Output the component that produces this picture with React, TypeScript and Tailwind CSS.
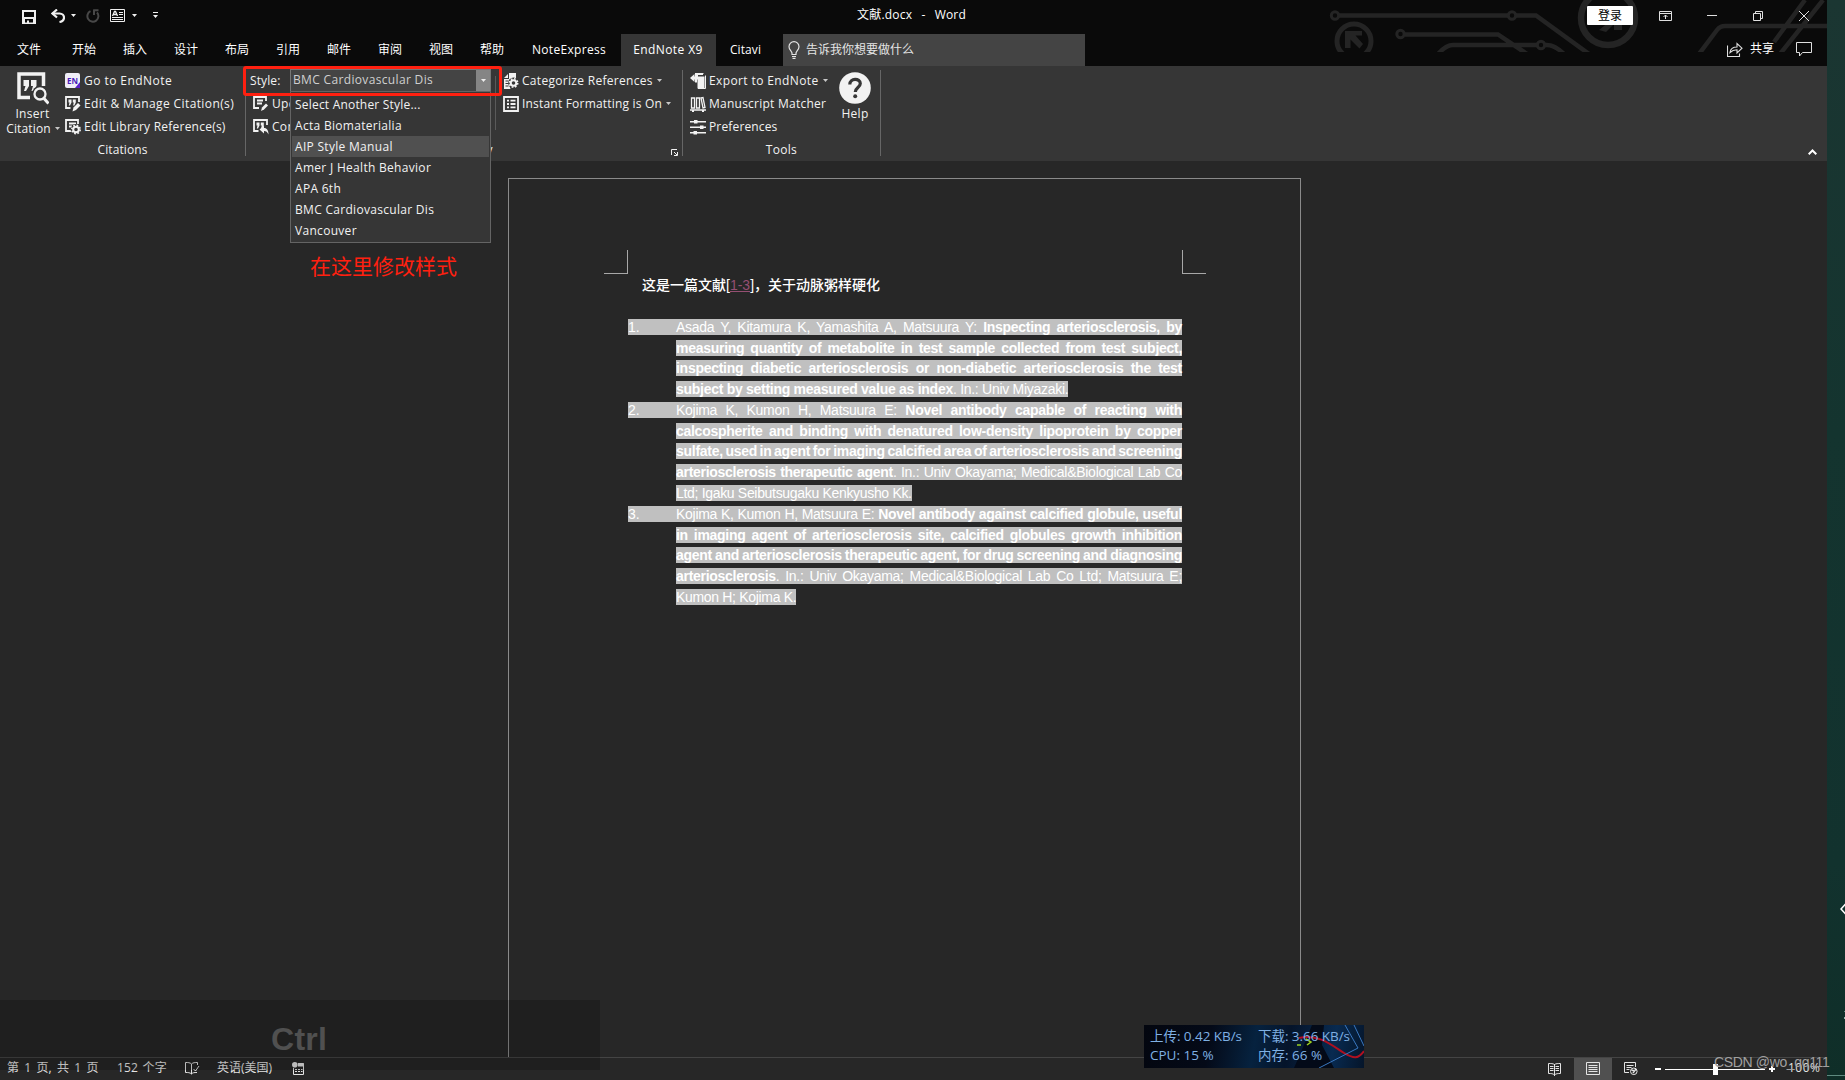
import type { ReactNode } from "react";

const Caret = ({ className = "" }: { className?: string }) => (
  <svg className={className} width="5" height="3" viewBox="0 0 5 3" fill="currentColor">
    <path d="M0 0h5L2.5 3z" />
  </svg>
);

const tabs = ["开始", "插入", "设计", "布局", "引用", "邮件", "审阅", "视图", "帮助"];

function TitleBar() {
  return (
    <div className="flex h-[31px] items-center">
      <div className="flex w-[180px] items-center pl-[22px] text-[#f0f0f0]">
        <svg className="mt-[3px]" width="14" height="14" viewBox="0 0 14 14">
          <path fill="currentColor" fillRule="evenodd" d="M0 0h14v14H0zM2 2v5h10v-5zM3 9v3.500h2v-2h2v2h4V9z" />
        </svg>
        <svg className="ml-[15px]" width="14" height="14" viewBox="0 0 14 14" fill="none" stroke="currentColor" strokeWidth="2.200">
          <path d="M6 0.500L1.500 4.500L6 8.500" />
          <path d="M1.500 4.500H8.500C11.500 4.500 13 6.500 13 8.500S11.500 12.500 8.500 13" />
        </svg>
        <Caret className="ml-[6px]" />
        <svg className="ml-[10px] text-[#484848]" width="14" height="14" viewBox="0 0 14 14" fill="none" stroke="currentColor" strokeWidth="2">
          <path d="M4.500 2.200A5.500 5.500 0 1 0 11 3.500M7.500 1.200H12.500M8 0.500V6" />
        </svg>
        <svg className="ml-[10px]" width="15" height="13" viewBox="0 0 15 13" fill="none" stroke="currentColor">
          <path d="M0.500 0.500h14v12h-14zM9 3.500h4M9 5.500h4M2 8.500h11M2 10.500h11" />
          <path d="M2.500 7L4.500 2.500h1L7.500 7M3.500 5.500h3" strokeWidth="1.300" />
        </svg>
        <Caret className="ml-[7px]" />
        <svg className="ml-[16px]" width="5" height="7" viewBox="0 0 5 7" fill="currentColor">
          <path d="M0 0h5v1H0zM0 3h5L2.500 6z" />
        </svg>
      </div>
      <div className="ml-[677px] w-[400px] -translate-y-px tracking-[0.2px] [word-spacing:1.3px] whitespace-pre text-white">文献.docx  -  Word</div>
      <div className="ml-auto flex items-center text-[#e0e0e0]">
        <div className="flex h-[19px] w-[46px] items-center justify-center rounded-[1px] bg-white text-black">登录</div>
        <svg className="ml-[26px]" width="13" height="10" viewBox="0 0 13 10" fill="none" stroke="currentColor">
          <path d="M0.500 0.500h12v9h-12zM0.500 2.500h12M6.500 8V4M4.500 6l2-2l2 2" />
        </svg>
        <div className="ml-[35px] h-px w-[10px] bg-[#e0e0e0]" />
        <svg className="ml-[36px]" width="10" height="10" viewBox="0 0 10 10" fill="none" stroke="currentColor">
          <path d="M0.500 2.500h7v7h-7zM2.500 2.500v-2h7v7h-2" />
        </svg>
        <svg className="mr-[18px] ml-[36px]" width="10" height="10" viewBox="0 0 10 10" fill="none" stroke="currentColor">
          <path d="M0 0L10 10M10 0L0 10" />
        </svg>
      </div>
    </div>
  );
}

function Circuit() {
  return (
    <svg className="absolute top-0 left-[1300px]" width="527" height="52" viewBox="0 0 527 52" fill="none" stroke="#242424" strokeWidth="4.500">
      <circle cx="35" cy="15.500" r="3.700" strokeWidth="3" />
      <circle cx="212" cy="15.500" r="3.700" strokeWidth="3" />
      <circle cx="100.500" cy="34" r="3.700" strokeWidth="3" />
      <circle cx="241" cy="45" r="3.700" strokeWidth="3" />
      <path d="M39 15.500H208M216 15.500H236L289 54M105 34.500H198L227 54M138 54Q146 45 153 45H237M245 45Q254 44 264 54" />
      <circle cx="54" cy="41" r="17" strokeWidth="5" />
      <path d="M45 31h17v4.500h-6.500l7.500 8.500l-3.500 4.500l-9-9v8.500h-5.500z" fill="#242424" stroke="none" />
      <circle cx="308" cy="18" r="27" strokeWidth="6.500" />
      <path d="M299 30l10-8v-14h13v22h-8v-6l-8 8z" fill="#242424" stroke="none" />
      <path d="M399 54L417 30Q420 26 425 26H527M505 0L474 42M523 0L480 54" />
    </svg>
  );
}

function TabBar() {
  return (
    <div className="mt-[3px] flex h-[32px] items-center text-white">
      <div className="-mt-px flex w-[58px] justify-center">文件</div>
      {tabs.map((t) => (
        <div key={t} className="-mt-px flex w-[51px] justify-center pl-px">{t}</div>
      ))}
      <div className="-mt-px ml-px flex w-[102px] justify-center tracking-[0.3px]">NoteExpress</div>
      <div className="ml-[1px] flex h-full w-[95px] items-center justify-center bg-[#363636] pr-px pb-px tracking-[0.4px]">EndNote X9</div>
      <div className="-mt-px flex w-[59px] justify-center tracking-[0.1px]">Citavi</div>
      <div className="ml-[8px] flex h-full w-[302px] items-center bg-[#444444] pl-[5px] text-[#e4e4e4]">
        <svg width="12" height="18" viewBox="0 0 12 18" fill="none" stroke="currentColor" strokeWidth="1.200">
          <path d="M4 13.500V12C3.500 10 1 8.500 1 5.700a5 5 0 0 1 10 0C11 8.500 8.500 10 8 12v1.500zM4 15.500h4M4.500 17.300h3" />
        </svg>
        <span className="ml-[6px]">告诉我你想要做什么</span>
      </div>
      <div className="mr-[15px] ml-auto flex items-center text-[#e0e0e0]">
        <svg className="-mt-px" width="16" height="15" viewBox="0 0 16 15" fill="none" stroke="currentColor" strokeWidth="1.100">
          <path d="M0.500 3.500v11h12v-3" />
          <path d="M3 10.500C3.500 7 6 5 10 5V1.500L15 6.200L10 11V7.800C7 7.800 5 8.500 3 10.500z" />
        </svg>
        <span className="-mt-[3px] ml-[7px] text-white">共享</span>
        <svg className="-mt-px ml-[22px]" width="16" height="15" viewBox="0 0 16 15" fill="none" stroke="currentColor">
          <path d="M0.500 0.500h15v10h-9l-3 3.500v-3.500h-3z" />
        </svg>
      </div>
    </div>
  );
}

const QuoteFrame = () => (
  <>
    <path d="M14 6V1H1v11h4.500" fill="none" stroke="currentColor" strokeWidth="1.800" />
    <path d="M3.500 3.500h3v3L5 9.500H3.800L4.500 6.500h-1zM7.800 3.500h3v3L9.300 9.500H8.100L8.800 6.500h-1z" />
  </>
);

function Icon({ children }: { children: ReactNode }) {
  return (
    <svg width="16" height="16" viewBox="0 0 16 16" fill="currentColor" className="shrink-0">
      {children}
    </svg>
  );
}

const Gear = ({ x, y }: { x: number; y: number }) => (
  <g transform={`translate(${x} ${y})`}>
    <circle r="5.400" fill="#363636" />
    <circle r="2.800" fill="none" stroke="currentColor" strokeWidth="2" />
    <circle r="4.200" fill="none" stroke="currentColor" strokeWidth="1.600" strokeDasharray="1.700 1.599" />
  </g>
);

function Row({ icon, children, caret, className = "" }: { icon: ReactNode; children: ReactNode; caret?: boolean; className?: string }) {
  return (
    <div className={`flex h-[23px] items-center whitespace-nowrap ${className}`}>
      <Icon>{icon}</Icon>
      <span className="ml-[3px]">{children}</span>
      {caret && <Caret className="ml-[4px] text-[#c8c8c8]" />}
    </div>
  );
}

const styles = ["Select Another Style...", "Acta Biomaterialia", "AIP Style Manual", "Amer J Health Behavior", "APA 6th", "BMC Cardiovascular Dis", "Vancouver"];

function Ribbon() {
  return (
    <div className="relative flex h-[95px] bg-[#363636] tracking-[0.3px] text-[#f2f2f2]">
      <div className="flex w-[245px] flex-col">
        <div className="flex h-[75px] pt-[3px]">
          <div className="flex w-[65px] flex-col items-center pt-[3px] leading-[15px]">
            <svg width="32" height="33" viewBox="0 0 32 33" fill="currentColor">
              <path d="M13 25.500H2V2h24.500V14" fill="none" stroke="currentColor" strokeWidth="3.500" />
              <path d="M6.500 8h5.500v6l-3 5h-2l1.500-5h-2zM14 8h5.500v6l-3 5h-2l1.500-5h-2z" />
              <circle cx="23" cy="22" r="8" fill="#363636" />
              <circle cx="23" cy="22" r="5.500" fill="#363636" stroke="currentColor" strokeWidth="2.300" />
              <path d="M27 26.500l4.500 5" stroke="currentColor" strokeWidth="3" />
            </svg>
            <span className="mt-[1px]">Insert</span>
            <span className="ml-[1px] flex items-center tracking-[0.15px]">Citation<Caret className="ml-[4px] text-[#c8c8c8]" /></span>
          </div>
          <div>
            <Row className="tracking-[0.45px]" icon={<><rect width="15" height="15" rx="2" fill="#f0eef8" /><path d="M15 9v6h-5z" fill="#5a20c8" /><text x="2" y="10.500" fontSize="8" letterSpacing="0" fontWeight="bold" fill="#4a1cb8" textLength="11">EN</text></>}>Go to EndNote</Row>
            <Row className="tracking-[0.39px]" icon={<><QuoteFrame /><path d="M7.500 15.500l1-4l4.500-4.500l2.500 2.500l-4.500 4.500z" /></>}>Edit &amp; Manage Citation(s)</Row>
            <Row className="tracking-[0.23px]" icon={<><path d="M13 5V1H1v11h5M4 4.500h7M4 7.500h3" fill="none" stroke="currentColor" strokeWidth="1.800" /><Gear x={11} y={10.500} /></>}>Edit Library Reference(s)</Row>
          </div>
        </div>
        <div className="flex h-[18px] items-center justify-center tracking-[0.1px]">Citations</div>
      </div>
      <div className="mt-[10px] h-[80px] w-px bg-[#666]" />
      <div className="flex w-[436px] flex-col">
        <div className="flex h-[75px] pt-[3px]">
          <div className="w-[249px] pl-[4px]">
            <div className="flex h-[23px] items-center">
              <span className="w-[40px] tracking-[0.1px]">Style:</span>
              <div className="flex h-[23px] w-[201px] items-center border border-[#777] bg-[#444] pl-[2px] tracking-[0.34px] text-[#d0d0d0]">
                <span className="-mt-px">BMC Cardiovascular Dis</span>
                <span className="ml-auto flex h-full w-[14px] items-center justify-center bg-[#858585] text-[#eee]"><Caret /></span>
              </div>
            </div>
            <Row className="pl-[3px]" icon={<><path d="M13 5V1H1v11h5M4 4.500h6M4 7.500h5" fill="none" stroke="currentColor" strokeWidth="1.800" /><path d="M8 15l1-3.500l4-4l2 2l-4 4z" /></>}>Update Citations and Bibliography</Row>
            <Row className="pl-[3px]" icon={<><QuoteFrame /><path d="M6.500 10.500l4.500-4v2.500c3 0 4.500 2.500 4.500 6.500c-1-2.500-2.500-3.500-4.500-3.500v2.500z" /></>}>Convert Citations and Bibliography</Row>
          </div>
          <div className="mt-[7px] h-[54px] w-px bg-[#5a5a5a]" />
          <div className="pl-[7px]">
            <Row caret icon={<><path d="M1 5l4-4v4zM6 0h7v5H9L5.500 9l2 7H1V6h5z" /><path d="M2.500 8h3M2.500 10.500h3M2.500 13h3" stroke="#363636" /><Gear x={10.500} y={10} /></>}>Categorize References</Row>
            <Row caret className="tracking-[0.2px]" icon={<path d="M1 1h14v14H1zM4 4.700h2M7.500 4.700h5M4 8h2M7.500 8h5M4 11.300h2M7.500 11.300h5" fill="none" stroke="currentColor" strokeWidth="1.800" />}>Instant Formatting is On</Row>
          </div>
        </div>
        <div className="flex h-[18px] items-center">
          <span className="ml-[173px]">Bibliography</span>
          <svg className="mt-[5px] mr-[4px] ml-auto" width="7" height="7" viewBox="0 0 7 7" fill="none" stroke="currentColor">
            <path d="M0.500 6V0.500H6M3 3l3 3M6.500 3v3.500H3" />
          </svg>
        </div>
      </div>
      <div className="mt-[4px] h-[86px] w-px bg-[#666]" />
      <div className="flex w-[197px] flex-col">
        <div className="flex h-[75px] pt-[3px] pl-[7px]">
          <div className="w-[149px]">
            <Row caret className="tracking-[0.38px]" icon={<><path d="M0 5l4.500-4v2.500H7v3H4.500V9z" /><path d="M5 0h8v2H8v4.500H7v3H5z" /><path d="M7.500 3.500h7v12h-7z" /><path d="M8 2.500h-.5v-2h6M15.500 2.500v13H8" fill="none" stroke="currentColor" strokeWidth="1" /></>}>Export to EndNote</Row>
            <Row className="tracking-[0.24px]" icon={<path d="M1.500 2h3v10h-3zM6.500 2h3v10h-3zM11 2l2-.5l2 10l-2 .5zM0 14h16M2 15.500h2M12 15.500h2" fill="none" stroke="currentColor" strokeWidth="1.300" />}>Manuscript Matcher</Row>
            <Row className="tracking-[0.15px]" icon={<><path d="M0 2h16v1.500H0zM0 7.500h16v1.500H0zM0 13h16v1.500H0z" /><path d="M4 1h3.500v3.500H4zM10 6.500h3.500v3.500H10zM3.500 12h3.500v3.500H3.500z" /></>}>Preferences</Row>
          </div>
          <div className="flex w-[32px] flex-col items-center pt-[3px] leading-[15px]">
            <svg width="32" height="32" viewBox="0 0 32 32">
              <circle cx="16" cy="16" r="15.800" fill="currentColor" />
              <path d="M10.800 12.500c0-7 10.500-6.500 10.500-1 0 4-5 4-5 8.500" fill="none" stroke="#363636" strokeWidth="3.200" />
              <circle cx="16.200" cy="24.300" r="2" fill="#363636" />
            </svg>
            <span className="mt-[2px]">Help</span>
          </div>
        </div>
        <div className="flex h-[18px] items-center justify-center">Tools</div>
      </div>
      <div className="mt-[4px] h-[86px] w-px bg-[#666]" />
      <svg className="mt-[83px] mr-[10px] ml-auto" width="9" height="6" viewBox="0 0 9 6" fill="none" stroke="#fff" strokeWidth="2">
        <path d="M0.700 5.300L4.500 1.500L8.300 5.300" />
      </svg>

      <div className="absolute top-[25px] left-[290px] z-10 w-[201px] border border-[#646464] bg-[#363636] pt-[2px] pb-px">
        {styles.map((s) => (
          <div key={s} className={`mx-px flex h-[21px] items-center pl-[3px] whitespace-nowrap ${s === "AIP Style Manual" ? "bg-[#505050]" : ""} ${s.startsWith("Select") ? "tracking-[0.2px]" : ""}`}>{s}</div>
        ))}
      </div>
      <div className="absolute top-0 left-[243px] z-20 h-[30px] w-[259px] rounded-[3px] border-[3px] border-[#ff2010]" />
      <div className="absolute top-[185px] left-[310px] z-10 text-[21px] leading-[30px] tracking-normal whitespace-nowrap text-[#ff2010]">在这里修改样式</div>
    </div>
  );
}

type Line = { n?: string; a?: string; b?: string; c?: string; end?: boolean; h: string };
const lines: Line[] = [
  { n: "1.", a: "Asada Y, Kitamura K, Yamashita A, Matsuura Y: ", b: "Inspecting arteriosclerosis, by", h: "mb-[5px]" },
  { b: "measuring quantity of metabolite in test sample collected from test subject,", h: "mb-[4px]" },
  { b: "inspecting diabetic arteriosclerosis or non-diabetic arteriosclerosis the test", h: "mb-[5px]" },
  { b: "subject by setting measured value as index", c: ". In.: Univ Miyazaki.", end: true, h: "mb-[5px]" },
  { n: "2.", a: "Kojima K, Kumon H, Matsuura E: ", b: "Novel antibody capable of reacting with", h: "mb-[5px]" },
  { b: "calcospherite and binding with denatured low-density lipoprotein by copper", h: "mb-[4px]" },
  { b: "sulfate, used in agent for imaging calcified area of arteriosclerosis and screening", h: "mb-[5px]" },
  { b: "arteriosclerosis therapeutic agent", c: ". In.: Univ Okayama; Medical&Biological Lab Co", h: "mb-[5px]" },
  { a: "Ltd; Igaku Seibutsugaku Kenkyusho Kk.", end: true, h: "mb-[5px]" },
  { n: "3.", a: "Kojima K, Kumon H, Matsuura E: ", b: "Novel antibody against calcified globule, useful", h: "mb-[5px]" },
  { b: "in imaging agent of arteriosclerosis site, calcified globules growth inhibition", h: "mb-[4px]" },
  { b: "agent and arteriosclerosis therapeutic agent, for drug screening and diagnosing", h: "mb-[5px]" },
  { b: "arteriosclerosis", c: ". In.: Univ Okayama; Medical&Biological Lab Co Ltd; Matsuura E;", h: "mb-[5px]" },
  { a: "Kumon H; Kojima K.", end: true, h: "" },
];

function Document() {
  return (
    <div className="relative h-[896px] bg-[#272727] pt-[17px]">
      <div className="ml-[508px] h-[879px] w-[793px] border border-b-0 border-[#8a8a8a] pt-[71px] pr-[94px] pl-[95px] font-['Liberation_Sans','Noto_Sans_CJK_SC',sans-serif] text-[14px] text-white">
        <div className="flex h-[24px] justify-between">
          <div className="w-[24px] border-r border-b border-[#a8a8a8]" />
          <div className="w-[24px] border-b border-l border-[#a8a8a8]" />
        </div>
        <div className="flex h-[22px] items-center pl-[38px] leading-[22px] font-medium whitespace-pre">
          这是一篇文献[<span className="text-[#954f72] underline">1-3</span>]，关于动脉粥样硬化
        </div>
        <div className="mt-[23px] pl-[24px]">
          {lines.map((l, i) => (
            <div key={i} className={`flex h-[16px] w-[554px] leading-[16px] ${l.h}`}>
              <div className={`w-[48px] shrink-0 ${l.n ? "bg-[#c0c0c0]" : ""}`}>{l.n}</div>
              <div className={`bg-[#c0c0c0] whitespace-nowrap ${l.a && !l.b ? "tracking-[-0.32px]" : "tracking-[-0.28px]"} ${l.end ? "" : "w-[506px] [text-align-last:justify] [word-spacing:-2px]"}`}>
                {l.a}<b>{l.b}</b>{l.c}
              </div>
            </div>
          ))}
        </div>
      </div>
    </div>
  );
}

function StatusBar() {
  return (
    <div className="flex h-[23px] items-center border-t border-[#444] bg-[#272727] text-[#e4e4e4]">
      <span className="w-[111px] pb-[3px] pl-[7px] [word-spacing:2.2px] whitespace-nowrap">第 1 页, 共 1 页</span>
      <span className="w-[74px] pb-[2px] pl-[6px] tracking-[0.2px] [word-spacing:1px] whitespace-nowrap">152 个字</span>
      <svg className="-mt-[2px]" width="15" height="13" viewBox="0 0 15 13" fill="none" stroke="currentColor">
        <path d="M6.500 12V2C5 .5 3 .5.500.500v10C3 10.500 5 10.500 6.500 12C8 10.500 9 10.500 12 10.500M6.500 2C8 .5 10 .5 12.500.500V3M8.500 7l2 2L14 4" />
      </svg>
      <span className="ml-[17px] w-[75px] pb-[2px] whitespace-nowrap">英语(美国)</span>
      <svg className="-mt-[2px]" width="13" height="13" viewBox="0 0 13 13" fill="none" stroke="currentColor">
        <path d="M1.500 6v6.500h10v-11H6M3 7.500h2M6 7.500h2M9 7.500h1.500M3 9.500h2M6 9.500h2M9 9.500h1.500" />
        <path d="M6 3h6" strokeWidth="3" />
        <circle cx="2.800" cy="2.800" r="2.800" fill="currentColor" stroke="none" />
      </svg>
      <div className="ml-auto flex h-full items-center">
        <svg width="13" height="13" viewBox="0 0 13 13" fill="none" stroke="currentColor">
          <path d="M6.500 1.500C5 .5 3 .5.500.500v10c2.500 0 4.500 0 6 1.500c1.500-1.500 3.500-1.500 6-1.500v-10c-2.500 0-4.500 0-6 1zM6.500 1v12M2 3.500h3.500M2 5.500h3.500M2 7.500h3.500M7.500 3.500H11M7.500 5.500H11M7.500 7.500H11" />
        </svg>
        <div className="ml-[13px] flex h-full w-[38px] items-center justify-center bg-[#505050]">
          <svg className="-mt-px" width="14" height="13" viewBox="0 0 14 13" fill="none" stroke="currentColor">
            <path d="M0.500 0.500h13v12h-13zM2.500 3.500h9M2.500 5.500h9M2.500 7.500h9M2.500 9.500h9" />
          </svg>
        </div>
        <svg className="ml-[12px]" width="14" height="14" viewBox="0 0 14 14" fill="none" stroke="currentColor">
          <path d="M5 10.500H0.500v-10h11V5M2.500 3.500h7M2.500 5.500h5M2.500 7.500h3" />
          <circle cx="9.800" cy="9.300" r="3.300" />
          <path d="M7.500 8l3 1l-1.500 2M11 6.500l1 2" strokeWidth="1.500" />
        </svg>
        <div className="ml-[17px] h-[2px] w-[6px] bg-white" />
        <div className="ml-[4px] flex h-[11px] w-[100px] items-center justify-center bg-[linear-gradient(#fff,#fff)] bg-[length:100%_1px] bg-center bg-no-repeat">
          <div className="h-[11px] w-[5px] bg-white" />
        </div>
        <svg className="ml-[4px]" width="6" height="6" viewBox="0 0 6 6" stroke="#fff" strokeWidth="2">
          <path d="M0 3h6M3 0v6" />
        </svg>
        <span className="mr-[7px] ml-[13px] w-[32px] pb-[2px] tracking-[0.5px]">100%</span>
      </div>
    </div>
  );
}

function NetMonitor() {
  return (
    <div className="absolute top-[1025px] left-[1144px] z-20 h-[43px] w-[220px] overflow-hidden bg-[linear-gradient(100deg,#03060f_0%,#040a18_30%,#06223f_50%,#05142a_65%,#082a50_85%,#05152a_100%)] text-[13.5px] text-[#7fb0e4]">
      <svg className="absolute inset-0" width="220" height="43" viewBox="0 0 220 43" fill="none">
        <path d="M150 43L160 20L168 0H180L178 20L190 43z" fill="#030a18" />
        <path d="M155 13C175 8 190 22 200 28S214 34 220 26" stroke="#b01020" strokeWidth="2" />
        <path d="M201 0L214 23L175 43M210 0L220 21" stroke="#3a78c0" />
        <path d="M153 20h4M162 14l5 3l-4 3" stroke="#9ad020" strokeWidth="1.500" />
      </svg>
      <div className="relative grid grid-cols-[108px_1fr] pt-[2px] pl-[6px] leading-[19px] whitespace-nowrap">
        <span className="tracking-[-0.05px]">上传: 0.42 KB/s</span><span className="tracking-[-0.05px]">下载: 3.66 KB/s</span>
        <span>CPU: 15 %</span><span>内存: 66 %</span>
      </div>
    </div>
  );
}

export default function App() {
  return (
    <div className="relative flex h-[1080px] w-[1845px] overflow-hidden bg-[#272727] font-['Open_Sans','Noto_Sans_CJK_SC',sans-serif] text-[12px]">
      <div className="flex w-[1827px] flex-col">
        <div className="relative h-[66px] bg-[#0a0a0a]">
          <Circuit />
          <div className="relative">
            <TitleBar />
            <TabBar />
          </div>
        </div>
        <Ribbon />
        <Document />
        <StatusBar />
      </div>
      <div className="flex w-[18px] flex-col items-end bg-[linear-gradient(#1b3632,#14342f_40%,#12322e_80%,#0f2e28)]">
        <svg className="mt-[903px]" width="5" height="12" viewBox="0 0 5 12" fill="none" stroke="#fff" strokeWidth="1.500">
          <path d="M6 0.500L1 6L6 11.500" />
        </svg>
        <div className="mt-[96px] h-px w-px bg-[#5f8a80]" />
        <div className="mt-[5px] h-[2px] w-px bg-[#9ab5ae]" />
        <div className="mt-[56px] h-px w-full bg-[#5f8a80]" />
      </div>
      <div className="absolute top-[1000px] left-0 z-20 flex h-[70px] w-[600px] bg-black/18 pt-[21px] pl-[271px] font-['Liberation_Sans'] text-[32px] leading-[37px] font-bold tracking-[0.3px] text-[#505050]">Ctrl</div>
      <NetMonitor />
      <div className="absolute top-[1053px] left-[1714px] z-20 font-['Liberation_Sans'] text-[14px] leading-[18px] tracking-[-0.35px] whitespace-nowrap text-[#a0a0a0]">CSDN @wo_qq111</div>
    </div>
  );
}
